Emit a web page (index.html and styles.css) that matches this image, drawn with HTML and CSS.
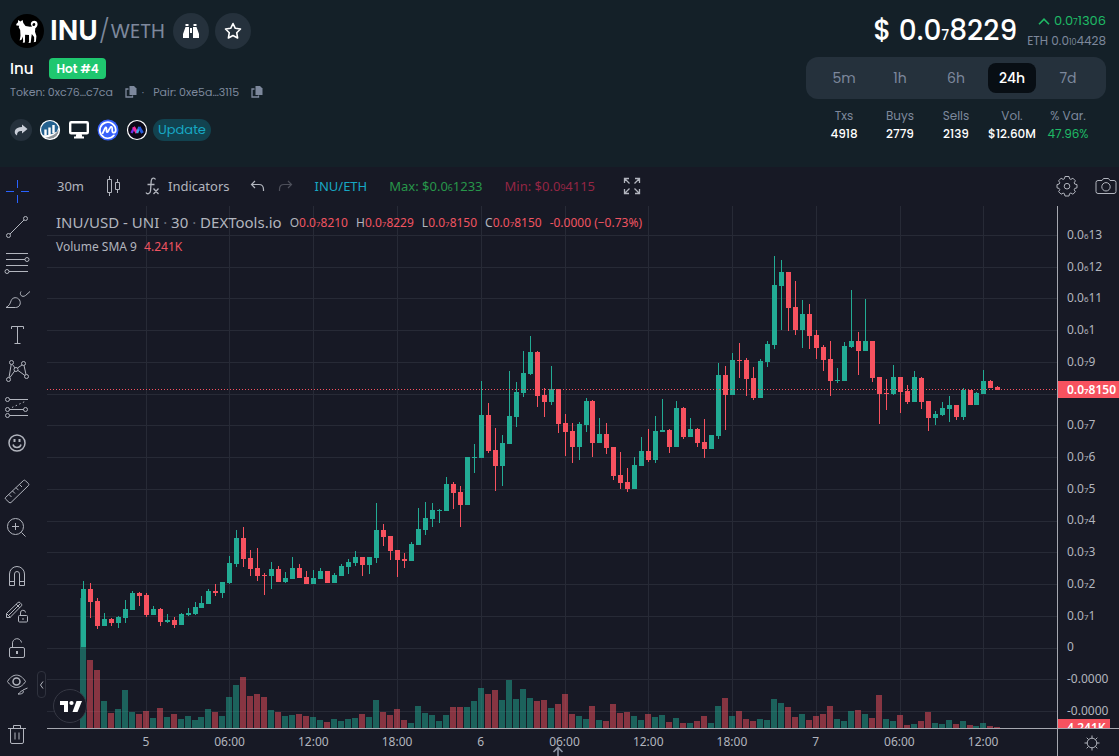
FILE: index.html
```html
<!DOCTYPE html>
<html lang="en">
<head>
<meta charset="utf-8">
<meta name="viewport" content="width=device-width, initial-scale=1">
<title>INU/WETH</title>
<link rel="stylesheet" href="styles.css">
</head>
<body>
<header class="pair-header">
  <div class="pair-info">
    <div class="pair-title">
      <svg class="token-logo" viewBox="0 0 34 34" aria-hidden="true"><circle cx="17" cy="17" r="17" fill="#000"/><path fill="#fff" d="M8.200 6l2.200 1.400L12.600 6l.7 2.900 2.200 3 4.500.8 2.200-.2c-1.800-1.300-2-4 .1-5.300 1.800-1.100 4.500-.4 5.100 1.800.6 2.200-.4 4.300-2.100 5.300l-.3 3.500 1.400 4.200-.5 5.800-2.300.4.600-1.300-.1-3.800-2.300-3.200-.5 3.700-.6 5.100-2.300.2.700-1.300-.1-6.600-3.900-.3-.2 7.700-2.200.3.500-1.600-.5-4.700-.9 3.200-2.100 1 .8-4.900-.3-5.800-1.500-2.600.6-1.600-2.900-.2-.1-1.500 1.600-1.500zM23.500 9.200c-1.100.5-1.500 1.900-.6 2.600 1 .6 2.400-.1 2.400-1.300 0-1-.9-1.700-1.800-1.300z"/></svg>
      <h1 class="pair-name">INU<span class="slash">/</span><span class="quote">WETH</span></h1>
      <button class="round-button" type="button" aria-label="Watch pair"><svg width="18" height="16" viewBox="0 0 18 16" fill="#fff"><path d="M3.500 1h3v2h-3zM11.500 1h3v2h-3zM3.500 4H7v11H1v-4zM11 4h3.500l2.500 7v4h-6zM8 5h2v5H8z"/></svg></button>
      <button class="round-button" type="button" aria-label="Add to favourites"><svg width="18" height="18" viewBox="0 0 18 18" fill="none" stroke="#fff" stroke-width="1.600" stroke-linejoin="round"><path d="M9 1.500l2.300 4.800 5.200.7-3.800 3.700.9 5.300L9 13.500 4.400 16l.9-5.300L1.500 7l5.200-.7z"/></svg></button>
    </div>
    <div class="pair-sub"><span class="token-name">Inu</span><span class="hot">Hot #4</span></div>
    <div class="addresses">
      <span>Token: 0xc76…c7ca</span>
      <button class="copy" type="button" aria-label="Copy token address"><svg width="12" height="12" viewBox="0 0 12 12"><path fill="#7d889c" d="M4.500 0H9l2.500 2.500V9h-7z"/><path d="M3.500 3H1v8h6.500V9.500" fill="none" stroke="#7d889c" stroke-width="1.300"/></svg></button>
      <span class="dot">·</span>
      <span>Pair: 0xe5a…3115</span>
      <button class="copy" type="button" aria-label="Copy pair address"><svg width="12" height="12" viewBox="0 0 12 12"><path fill="#7d889c" d="M4.500 0H9l2.500 2.500V9h-7z"/><path d="M3.500 3H1v8h6.500V9.500" fill="none" stroke="#7d889c" stroke-width="1.300"/></svg></button>
    </div>
    <div class="links">
      <a class="link share" href="#" aria-label="Share"><svg width="14" height="12" viewBox="0 0 14 12"><path fill="#c9ced8" d="M8 .5L13.500 5 8 9.500V7C4.500 6.800 3 8 3 11.500 1 10.500.3 8.500 1 6.500 1.800 4.200 4.500 3 8 3z"/></svg></a>
      <a class="link" href="#" aria-label="Etherscan"><svg width="22" height="22" viewBox="0 0 22 22"><circle cx="11" cy="11" r="9.500" fill="#fff"/><path fill="#24618f" d="M2 13A9 9 0 0 1 19.500 8L18 12.500Q11 17 3 16z"/><path fill="#8d9398" d="M5 19q10-1 15-8.500Q19.500 19 11 20q-3 0-6-1z"/><path stroke="#fff" stroke-width="2.400" d="M6.500 10.500v6M10.500 8.500v7.500M14.500 6v8"/><circle cx="11" cy="11" r="9.500" fill="none" stroke="#fff" stroke-width="1.200"/></svg></a>
      <a class="link" href="#" aria-label="Website"><svg width="20" height="18" viewBox="0 0 20 18"><rect x="1.200" y="1.200" width="17.600" height="11" rx="1" fill="none" stroke="#fff" stroke-width="2.400"/><path fill="#fff" d="M7.500 12h5l.7 3.500H15V17.500H5V15.500h1.800z"/></svg></a>
      <a class="link" href="#" aria-label="CoinMarketCap"><svg width="22" height="22" viewBox="0 0 22 22"><circle cx="11" cy="11" r="10.500" fill="#3861fb"/><path d="M17 16.300A8 8 0 1 1 18.800 11c0 3.500-3.600 3.400-3.600.8V9.300c0-1.700-1.400-2-2-.7L11 12.500c-.5 1-1.400.8-1.500-.3V9.500c0-1.400-1-1.600-1.500-.4l-2.300 5.100" fill="none" stroke="#fff" stroke-width="1.700" stroke-linecap="round"/></svg></a>
      <a class="link" href="#" aria-label="MoonTools"><svg width="22" height="22" viewBox="0 0 22 22"><circle cx="11" cy="11" r="9.500" fill="#0a0817" stroke="#fff" stroke-width="1.200"/><path d="M5.500 14L8 9" stroke="#7130e8" stroke-width="2.400"/><path d="M7.500 8l3.500 6" stroke="#f02a9b" stroke-width="3"/><path d="M11 14l2.500-6" stroke="#3fa7e8" stroke-width="2.400"/><path d="M13 8l3.500 6" stroke="#265adb" stroke-width="3"/></svg></a>
      <button class="update" type="button">Update</button>
    </div>
  </div>

  <div class="pair-stats">
    <div class="price-row">
      <strong class="price">$ 0.0<small>7</small>8229</strong>
      <div class="price-side">
        <span class="up"><svg width="12" height="7" viewBox="0 0 12 7" fill="none" stroke="currentColor" stroke-width="1.600"><path d="M1 6.200L6 1.200l5 5"/></svg><span>0.0<small>7</small>1306</span></span>
        <span class="eth">ETH 0.0<small>10</small>4428</span>
      </div>
    </div>
    <div class="ranges">
      <button class="range" type="button">5m</button><button class="range" type="button">1h</button><button class="range" type="button">6h</button><button class="range active" type="button" aria-pressed="true">24h</button><button class="range" type="button">7d</button>
    </div>
    <table class="stats">
      <thead><tr><th>Txs</th><th>Buys</th><th>Sells</th><th>Vol.</th><th>% Var.</th></tr></thead>
      <tbody><tr><td>4918</td><td>2779</td><td>2139</td><td>$12.60M</td><td class="positive">47.96%</td></tr></tbody>
    </table>
  </div>
</header>

<main class="chart">
  <nav class="tools" aria-label="Drawing tools">
    <button class="tool" type="button" aria-label="Cross"><svg viewBox="0 0 28 28" class="blue"><path d="M14.500 3v8M14.500 18v8M3 14.500h8M18 14.500h8"/></svg></button>
    <button class="tool" type="button" aria-label="Trend line"><svg viewBox="0 0 28 28"><circle cx="5.500" cy="22.500" r="2"/><circle cx="22.500" cy="5.500" r="2"/><path d="M7 21L21 7"/></svg></button>
    <button class="tool" type="button" aria-label="Fib retracement"><svg viewBox="0 0 28 28"><path d="M3 4.500h22M3 10.500h19M3 16.500h22M6 22.500h19"/><circle cx="24" cy="10.500" r="2"/><circle cx="4" cy="22.500" r="2"/></svg></button>
    <button class="tool" type="button" aria-label="Brush"><svg viewBox="0 0 28 28"><path d="M3 22.500h9.500c4 0 6-4 4-7.500-2-3.300-7-3-8.300.5C7 19 6 21 3 22.500zM18 6.500c-2 3 1 6.500 4.500 4L27 6.500"/></svg></button>
    <button class="tool" type="button" aria-label="Text"><svg viewBox="0 0 28 28"><path d="M8.500 8V5.500h12V8M14.500 5.500v17M11.500 22.500h6"/></svg></button>
    <button class="tool" type="button" aria-label="Patterns"><svg viewBox="0 0 28 28"><circle cx="8.500" cy="5.500" r="2"/><circle cx="20.500" cy="6.500" r="2"/><circle cx="13" cy="12.500" r="2"/><circle cx="5.500" cy="22.500" r="2"/><circle cx="23.500" cy="19.500" r="2"/><path d="M8.200 7.500L6 20.500M9.500 7.500l2.500 3.500M14.500 11L19 8M21 8.500l2 9M11.700 14l-5 6.800M15 13.500l7 5"/></svg></button>
    <button class="tool" type="button" aria-label="Prediction and measurement"><svg viewBox="0 0 28 28"><circle cx="4.500" cy="6.500" r="2"/><circle cx="4.500" cy="16.500" r="2"/><circle cx="22.500" cy="16.500" r="2"/><circle cx="4.500" cy="22.500" r="2"/><path d="M6.500 6.500H25M6.500 16.500h14M6.500 22.500H25"/><path d="M9 14.500L23 8" stroke-dasharray="1.500 2.500"/></svg></button>
    <button class="tool" type="button" aria-label="Icons"><svg viewBox="0 0 28 28"><circle cx="14" cy="14" r="8" stroke-width="1.500"/><path stroke-width="1.500" d="M10 15.500c1 4 7 4 8 0"/><path d="M11.500 10v3M16.500 10v3" stroke-width="2"/></svg></button>
    <button class="tool group" type="button" aria-label="Measure"><svg viewBox="0 0 28 28"><path d="M2.500 20.500l18-17q1-.8 2 .2l3 3q.8 1 0 1.800L8 25.500q-1 .8-2-.2l-3.500-3.300q-.6-.8 0-1.500zM6 17.500l2.500 2.500M9.500 14l2.500 2.500M13 10.700l2.500 2.500M16.500 7.500l2.500 2.500"/></svg></button>
    <button class="tool" type="button" aria-label="Zoom in"><svg viewBox="0 0 28 28"><circle cx="12.500" cy="13.500" r="8"/><path d="M12.500 10v7M9 13.500h7M18.500 19.500l4 4"/></svg></button>
    <button class="tool group" type="button" aria-label="Magnet"><svg viewBox="0 0 28 28"><path d="M6.500 24.500V13a7.500 7.500 0 0 1 15 0v11.500h-5V13a2.500 2.500 0 0 0-5 0v11.500zM6.500 20.500h5M16.500 20.500h5"/></svg></button>
    <button class="tool" type="button" aria-label="Stay in drawing mode"><svg viewBox="0 0 28 28"><path d="M3.500 20.500v-4L15 5.500q1-.8 2 0l1.500 1.700q.8.800 0 1.600L7 20.500zM3.500 16.500l4 4M6 18L17 7M13 7l4 4"/><rect x="15.500" y="18.500" width="9" height="6.500" rx="1"/><path d="M17.500 18.500V16a2.500 2.500 0 0 1 5-.5M20 21v2"/></svg></button>
    <button class="tool" type="button" aria-label="Lock all drawings"><svg viewBox="0 0 28 28"><rect x="6.500" y="14.500" width="15" height="10" rx="1.500"/><path d="M9.500 14.500V11a4.500 4.500 0 0 1 9-1.500"/><path d="M14 18v3" stroke-width="2"/></svg></button>
    <button class="tool" type="button" aria-label="Hide all drawings"><svg viewBox="0 0 28 28"><path d="M4.500 12.500c5-8.500 13-8.500 18 0-5 8-13 8-18 0z"/><circle cx="13.500" cy="12.500" r="3.500" stroke-width="1.500"/><path d="M15 25c2 0 2-3.500 5-3.500 1.500 2-1 4-5 3.500zM20 21l4.500-2"/></svg></button>
    <button class="tool trash" type="button" aria-label="Remove objects"><svg viewBox="0 0 28 28"><path d="M5 8.500h18M7.500 8.500V22q0 1.500 1.500 1.500h10q1.500 0 1.500-1.500V8.500M10.500 8.500v-3h7v3M12 12.500v7M16 12.500v7"/></svg></button>
    <button class="collapse" type="button" aria-label="Collapse toolbar"><svg width="5" height="8" viewBox="0 0 5 8" fill="none" stroke="currentColor"><path d="M4 .5L1.500 4 4 7.500"/></svg></button>
  </nav>

  <div class="chart-body">
    <div class="topbar">
      <button class="bar-item" type="button">30m</button>
      <button class="bar-item candle-style" type="button" aria-label="Candles"><svg width="16" height="22" viewBox="0 0 16 22"><path d="M1.500 4.500h4v13h-4zM3.500 1v3.500M3.500 17.500V21M9.500 7.500h4v7h-4zM11.500 4v3.500M11.500 14.500V18"/></svg></button>
      <button class="bar-item indicators" type="button"><svg width="15" height="18" viewBox="0 0 15 18"><path stroke-width="1.300" d="M10.500 2.500C9.500.5 6.500.5 6.200 4L5.500 14c-.3 3-3.500 3.500-4.500 1.500M2.500 7.500h7M8.500 11.500l5 5.500M13.500 11.500l-5 5.500"/></svg>Indicators</button>
      <button class="bar-item undo" type="button" aria-label="Undo"><svg width="15" height="12" viewBox="0 0 15 12"><path stroke-width="1.200" d="M5 1L1.500 4.500 5 8M1.500 4.500H9q4.500 0 4.500 5V11"/></svg></button>
      <button class="bar-item redo" type="button" aria-label="Redo" disabled><svg width="15" height="12" viewBox="0 0 15 12"><path stroke-width="1.200" d="M10 1l3.500 3.500L10 8M13.500 4.500H6q-4.500 0-4.500 5V11"/></svg></button>
      <button class="bar-item pair-switch" type="button">INU/ETH</button>
      <span class="max">Max: $0.0<small>6</small>1233</span>
      <span class="min">Min: $0.0<small>9</small>4115</span>
      <button class="bar-item" type="button" aria-label="Fullscreen"><svg width="18" height="18" viewBox="0 0 18 18"><path stroke-width="1.300" d="M1.500 6V1.500H6M1.500 1.500l5 5M12 1.500h4.500V6M16.500 1.500l-5 5M1.500 12v4.500H6M1.500 16.500l5-5M16.500 12v4.500H12M16.500 16.500l-5-5"/></svg></button>
      <button class="bar-item settings" type="button" aria-label="Settings"><svg width="22" height="22" viewBox="0 0 22 22"><path d="M9 1.500h4l.6 2.300 1.300.6 2-1.200 2.500 2.600-1.200 2 .5 1.200 2.300.6v3.200l-2.300.7-.5 1.300 1.200 2-2.500 2.400-2-1.200-1.300.6-.6 2.400H9l-.6-2.400-1.300-.5-2 1.100-2.500-2.500 1.200-2-.6-1.200-2.200-.7V9.600L3.200 9l.6-1.200-1.200-2 2.500-2.600 2 1.200 1.300-.6z"/><circle cx="11" cy="11.200" r="2.800"/></svg></button>
      <button class="bar-item" type="button" aria-label="Take a snapshot"><svg width="22" height="18" viewBox="0 0 22 18"><path d="M3 3.500h4l1.500-2h5l1.500 2h4q2 0 2 2v9q0 2-2 2H3q-2 0-2-2v-9q0-2 2-2z"/><circle cx="11" cy="9.800" r="4.200"/></svg></button>
    </div>

    <div class="plot">
      <svg class="plot-canvas" viewBox="47 206 1010 522" preserveAspectRatio="none" role="img" aria-label="INU/USD price and volume"></svg>
      <div class="legend">
        <div class="legend-main"><span class="symbol">INU/USD - UNI <i>·</i> 30 <i>·</i> DEXTools.io</span>
          <span>O<b>0.0<small>7</small>8210</b></span><span>H<b>0.0<small>7</small>8229</b></span><span>L<b>0.0<small>7</small>8150</b></span><span>C<b>0.0<small>7</small>8150</b></span><b>-0.0000 (−0.73%)</b></div>
        <div class="legend-volume">Volume SMA 9 <b>4.241K</b></div>
      </div>
      <a class="tv-logo" href="#" aria-label="TradingView"><svg width="36" height="36" viewBox="0 0 36 36"><circle cx="18" cy="18" r="16.500" fill="#171925" stroke="#363844"/><path fill="#fff" d="M8 13h8v11h-4v-7H8zM24.500 13H30l-4.500 11h-5z"/><circle cx="19.500" cy="15" r="2.100" fill="#fff"/></svg></a>
    </div>

    <div class="price-axis">
      <ul class="price-labels">
        <li>0.0<small>6</small>13</li><li>0.0<small>6</small>12</li><li>0.0<small>6</small>11</li><li>0.0<small>6</small>1</li><li>0.0<small>7</small>9</li><li></li><li>0.0<small>7</small>7</li><li>0.0<small>7</small>6</li><li>0.0<small>7</small>5</li><li>0.0<small>7</small>4</li><li>0.0<small>7</small>3</li><li>0.0<small>7</small>2</li><li>0.0<small>7</small>1</li><li>0</li><li>-0.0000</li><li>-0.0000</li>
      </ul>
      <span class="price-tag">0.0<small>7</small>8150</span>
      <span class="volume-tag">4.241K</span>
    </div>

    <div class="time-axis">
      <span>5</span><span>06:00</span><span>12:00</span><span>18:00</span><span>6</span><span>06:00</span><span>12:00</span><span>18:00</span><span>7</span><span>06:00</span><span>12:00</span>
      <svg class="up-arrow" width="12" height="10" viewBox="0 0 12 10" fill="none" stroke="#8b93a3" stroke-width="1.600"><path d="M6 10V1.500M1.500 6L6 1.500 10.500 6"/></svg>
    </div>
    <button class="axis-settings" type="button" aria-label="Axis settings"><svg width="16" height="16" viewBox="0 0 16 16"><circle cx="8" cy="8" r="4.800"/><path d="M8 .5v2.700M8 12.800v2.700M.5 8h2.700M12.800 8h2.700M2.700 2.700l1.900 1.900M11.400 11.400l1.900 1.900M13.300 2.700l-1.900 1.900M4.600 11.400l-1.900 1.900"/></svg></button>
  </div>
</main>
<script src="chart.js"></script>
</body>
</html>
```
FILE: styles.css
```css
* { box-sizing: border-box; }
body {
  margin: 0;
  min-height: 100vh;
  display: flex;
  flex-direction: column;
  background: #142028;
  color: #fff;
  font-family: Poppins, Inter, sans-serif;
}
button {
  margin: 0;
  padding: 0;
  border: 0;
  background: none;
  color: inherit;
  font: inherit;
  cursor: pointer;
}
svg { display: block; }
/* Count of collapsed zeros inside a price */
small { font-size: 66%; line-height: 1; }

/* Pair header */
.pair-header {
  display: flex;
  justify-content: space-between;
  gap: 24px;
  padding: 13px 13px 0 10px;
  min-height: 167px;
}
.pair-title { display: flex; align-items: center; height: 36px; }
.token-logo { width: 34px; height: 34px; margin-right: 6px; }
.pair-name { display: flex; align-items: center; margin: 0; font-size: 28px; font-weight: 600; line-height: 36px; }
.slash { margin: 0 1px; color: #7d889c; font-size: 24px; font-weight: 300; }
.quote { margin-right: 2px; color: #7d889c; font-size: 20px; font-weight: 400; }
.round-button {
  display: grid;
  place-items: center;
  width: 36px;
  height: 36px;
  margin-left: 6px;
  border-radius: 50%;
  background: #25313c;
}
.pair-sub { display: flex; align-items: center; gap: 16px; height: 21px; margin-top: 9px; }
.token-name { font-size: 15px; font-weight: 500; }
.hot { padding: 0 7px; border-radius: 4px; background: #1fc76f; font-size: 12px; font-weight: 600; line-height: 21px; }
.addresses { display: flex; align-items: center; height: 16px; margin-top: 5px; color: #7d889c; font-size: 11px; }
.copy { margin-left: 12px; }
.dot { margin: 0 9px 0 5px; }
.links { display: flex; align-items: center; gap: 7px; height: 22px; margin-top: 19px; }
.link { display: grid; place-items: center; width: 22px; height: 22px; }
.share { border-radius: 50%; background: #25313c; }
.update { margin-left: -2px; padding: 0 5px; border-radius: 11px; background: #12424f; color: #17a8c4; font-size: 13px; line-height: 22px; }

.pair-stats { width: 300px; }
.price-row { display: flex; justify-content: flex-end; align-items: center; gap: 10px; height: 36px; white-space: nowrap; }
.price { font-size: 28px; font-weight: 500; }
.price small { font-size: 50%; }
.price-side { display: flex; flex-direction: column; align-items: flex-end; font-size: 12px; line-height: 20px; color: #7d889c; }
.up { display: flex; align-items: center; gap: 4px; color: #1fba66; font-size: 13px; }
.ranges { display: flex; margin-top: 8px; padding: 6px 10px; border-radius: 12px; background: #25313c; }
.range { flex: 1; height: 30px; margin: 0 4px; border-radius: 8px; color: #7d889c; font-size: 14px; }
.range.active { background: #080e14; color: #fff; font-weight: 500; }
.stats { width: 280px; margin: 8px 10px 0; table-layout: fixed; border-collapse: collapse; font-size: 12px; line-height: 18px; text-align: center; }
.stats th { padding: 0; color: #7d889c; font-weight: 400; }
.stats td { padding: 0; font-weight: 500; }
.stats .positive { color: #1fba66; font-weight: 400; }

/* Chart */
.chart {
  flex: 1;
  display: grid;
  grid-template-columns: 47px minmax(0, 1fr);
  background: #171925;
  color: #b2b5be;
  font-family: "Trebuchet MS", "Noto Sans", sans-serif;
}
.tools { position: relative; display: flex; flex-direction: column; padding: 6px 0 4px; }
.tool { display: grid; place-items: center; width: 34px; height: 36px; }
.tool svg { width: 28px; height: 28px; fill: none; stroke: #b2b5be; }
.tool .blue { stroke: #2962ff; }
.tool.group { margin-top: 12px; }
.tool.trash { margin-top: auto; }
.collapse {
  position: absolute;
  right: 1px;
  bottom: 58px;
  display: grid;
  place-items: center;
  width: 9px;
  height: 27px;
  border: 1px solid #2f323e;
  border-radius: 4px;
}
.chart-body {
  display: grid;
  grid-template-columns: minmax(0, 1fr) 62px;
  grid-template-rows: 39px 1fr 28px;
}
.topbar { grid-column: 1 / -1; display: flex; align-items: center; padding: 0 2px 2px 10px; font-size: 13px; white-space: nowrap; }
.topbar svg { fill: none; stroke: #b2b5be; }
.bar-item { display: flex; align-items: center; }
.candle-style { margin-left: 22px; }
.indicators { gap: 8px; margin-left: 23px; }
.undo { margin-left: 20px; }
.redo { margin-left: 13px; opacity: .35; }
.pair-switch { margin-left: 22px; color: #17a8c4; }
.max { margin: 0 22px; color: #27964a; }
.min { margin-right: 28px; color: #942644; }
.settings { margin: 0 17px 0 auto; }

.plot { position: relative; }
.plot-canvas { position: absolute; width: 100%; height: 100%; }
.grid-line { stroke: #272a36; }
.last-price { stroke: #f7525f; stroke-dasharray: 1 2; }
.gain { fill: #22ab94; }
.loss { fill: #f7525f; }
.volume { opacity: .5; }
.legend { position: absolute; top: 5px; left: 9px; white-space: nowrap; }
.legend b { color: #f05461; font-weight: 400; }
.legend-main { display: flex; align-items: center; gap: 8px; height: 22px; font-size: 12px; }
.symbol { font-size: 15px; }
.symbol i { color: #696c78; font-style: normal; }
.legend-volume { height: 22px; margin-top: 3px; font-size: 12px; line-height: 22px; }
.legend-volume b { margin-left: 4px; }
.tv-logo { position: absolute; left: 5px; bottom: 4px; }

.price-axis { position: relative; overflow: hidden; border-left: 1px solid #a6a8b0; font-size: 12px; }
.price-labels { display: flex; flex-direction: column; justify-content: space-between; height: 100%; margin: 0; padding: 21px 0 9px 9px; list-style: none; }
.price-labels li { height: 16px; line-height: 16px; white-space: nowrap; }
.price-tag, .volume-tag { position: absolute; left: 0; padding-left: 9px; background: #f7525f; color: #fff; font-weight: 600; line-height: 17px; }
.price-tag { top: 175px; right: 0; }
.volume-tag { bottom: -8px; width: 52px; }
.time-axis { position: relative; display: grid; grid-template-columns: repeat(11, 1fr); padding: 0 32px 0 57px; border-top: 1px solid #a6a8b0; font-size: 12px; line-height: 26px; text-align: center; }
.up-arrow { position: absolute; left: 505px; bottom: 0; }
.axis-settings { display: grid; place-items: center; padding-left: 6px; border-top: 1px solid #a6a8b0; border-left: 1px solid #a6a8b0; }
.axis-settings svg { fill: none; stroke: #b2b5be; }
```
FILE: chart.js
```js
(() => {
// One candle per entry: direction, high, body top, body bottom, low, volume top.
// A trailing letter overrides the colour of the volume bar.
const candles = `
g 581 589 647 647 598,r 583 589 602 618 660,r 598 601 626 629 670,g 613 619 626 626 701,r 618 619 623 626 713,g 616 617 623 628 709,
g 600 609 618 623 690,g 591 593 610 610 712,r 592 593 596 606 714,r 593 595 615 617 711,g 606 609 615 615 718,r 608 609 622 626 708,
g 614 620 622 623 717,r 617 620 625 628 714,g 613 614 625 625 719,g 608 613 615 616 716,g 602 607 614 615 720,g 596 603 608 608 717,
g 589 591 604 604 709,r 584 591 593 596 712,g 582 582 593 598 716,g 556 563 583 584 697,g 530 538 564 567 685,r 527 538 559 567 677,
r 550 558 569 576 696,r 548 568 576 581 694,r 573 575 576 595 697,g 562 569 576 589 710,r 566 569 582 582 712,g 572 578 582 583 716,
g 557 568 579 579 715,r 564 568 578 578 714,r 571 577 584 584 716,g 570 578 584 584 717,g 568 571 579 579 720,r 571 571 583 583 722,
g 573 575 583 583 719,g 564 566 576 576 721,g 559 562 567 574 719,g 551 557 563 566 718,r 557 557 565 576 714,g 557 557 565 574 717,
g 503 530 558 563 700,r 524 530 537 546 712,r 536 536 551 560 715,r 550 550 560 577 709,r 553 559 561 568 720,g 542 544 561 561 723,
g 508 529 545 545 706,g 502 518 530 535 713,g 503 510 519 527 715,g 509 510 511 523 721,g 477 484 511 511 715,r 482 484 493 509 707,
r 486 492 505 527 707,g 457 457 505 505 707,g 444 457 458 473 701,g 381 415 458 458 688,r 403 415 451 453 694,r 428 450 466 491 690,
g 435 443 466 486 700,g 371 416 444 444 680,g 382 392 417 427 699,g 351 373 393 397 689,g 336 352 374 375 698,r 351 352 396 407 701,
r 388 395 402 417 700,g 366 389 402 405 708,r 389 389 424 433 704,r 414 423 432 456 694,r 423 431 447 463 714,g 422 424 447 460 716,
g 398 401 425 432 719,r 400 401 443 457 706,g 418 434 443 443 720,r 423 434 448 454 721,r 447 447 476 480 704,r 452 475 483 489 713,
r 468 482 489 492 712,g 457 465 489 489 716,g 437 451 466 466 720,r 429 451 460 462 714,g 416 431 460 463 717,g 399 430 432 432 715,
r 429 430 447 453 722,g 401 408 447 447 718,r 407 408 437 439 723,g 418 429 437 437 723,r 428 429 443 447 721,r 419 442 449 458 716,
g 435 435 449 449 723,g 363 375 436 439 706,r 366 375 395 430 698,g 353 360 395 395 716,r 343 360 361 378 711,r 358 360 379 396 719,
r 367 378 398 400 721,g 359 361 398 398 719,g 341 344 362 367 720,g 256 285 345 349 699,g 260 272 286 330 703,r 272 272 308 331 707,
r 281 307 330 335 717,g 300 314 330 348 714,r 304 314 336 349 720,r 330 335 348 359 716,r 345 347 360 371 714,r 341 359 381 396 706,
g 368 380 381 383 719,g 342 346 381 381 721,g 290 341 347 348 711,r 332 341 351 375 710,g 299 341 351 351 714,r 341 341 378 382 718,
r 377 377 394 424 695,r 379 393 394 410 719 g,g 365 377 394 395 721,r 377 377 392 413 715,r 385 391 402 404 725,g 371 377 402 402 724,
r 377 378 402 409 721,r 401 401 418 431 712,g 411 414 418 425 723,g 402 408 415 416 724,g 396 405 409 422 720,r 405 405 417 420 724,
g 388 390 417 420 721,r 390 390 405 405 725,g 392 393 405 405 726,g 370 381 394 394 723,r 380 381 388 388 726,r 386 387 390 390 727`
  .split(',').map(entry => entry.trim().split(' '));

const canvas = document.querySelector('.plot-canvas');

function add(name, className, attributes) {
  const node = document.createElementNS('http://www.w3.org/2000/svg', name);
  node.setAttribute('class', className);
  for (const key in attributes) node.setAttribute(key, attributes[key]);
  canvas.appendChild(node);
}

const line = (className, x1, y1, x2, y2) => add('line', className, { x1, y1, x2, y2 });
const bar = (className, x, y, width, height) => add('rect', className, { x, y, width, height });
const tone = letter => (letter === 'g' ? 'gain' : 'loss');
const candleX = index => Math.floor(83.3 + index * 6.982);
const left = 47, right = 1057, top = 206, bottom = 728;

for (let i = 0; i < 16; i++) {
  const y = Math.floor(235.5 + i * 476 / 15) + 0.5;
  line('grid-line', left, y, right, y);
}
// The first vertical line marks the tenth candle; the rest follow every six hours.
for (let i = 9; i < candles.length; i += 12) {
  const x = candleX(i) + 0.5;
  line('grid-line', x, top, x, bottom);
}
candles.forEach((c, i) => {
  bar('volume ' + tone(c[6] || c[0]), candleX(i) - 3, +c[5], 6, bottom - c[5]);
});
candles.forEach((c, i) => {
  const x = candleX(i);
  bar(tone(c[0]), x, +c[1], 1, c[4] - c[1]);
  bar(tone(c[0]), x - 2, +c[2], 5, c[3] - c[2]);
});
line('last-price', left, 389.5, right, 389.5);
})();
```
